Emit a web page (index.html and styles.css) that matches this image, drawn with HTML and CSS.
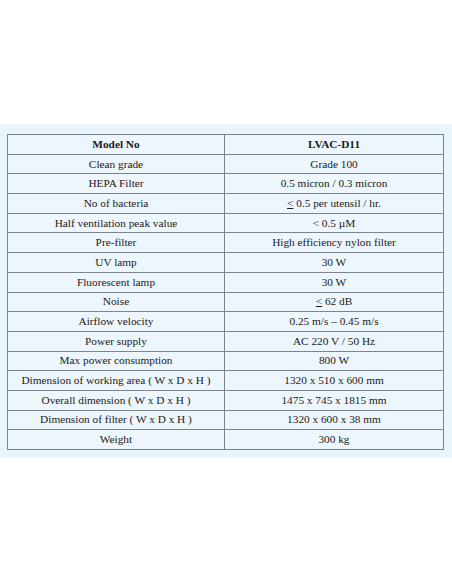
FILE: index.html
```html
<!DOCTYPE html>
<html>
<head>
<meta charset="utf-8">
<link rel="stylesheet" href="styles.css">
</head>
<body>
<div class="panel">
<table class="spec">
<colgroup><col class="c1"><col class="c2"></colgroup>
<tr class="head"><th>Model No</th><th>LVAC-D11</th></tr>
<tr><td>Clean grade</td><td>Grade 100</td></tr>
<tr><td>HEPA Filter</td><td>0.5 micron / 0.3 micron</td></tr>
<tr><td>No of bacteria</td><td><u>&lt;</u> 0.5 per utensil / hr.</td></tr>
<tr><td>Half ventilation peak value</td><td>&lt; 0.5 µM</td></tr>
<tr><td>Pre-filter</td><td>High efficiency nylon filter</td></tr>
<tr><td>UV lamp</td><td>30 W</td></tr>
<tr><td>Fluorescent lamp</td><td>30 W</td></tr>
<tr><td>Noise</td><td><u>&lt;</u> 62 dB</td></tr>
<tr><td>Airflow velocity</td><td>0.25 m/s – 0.45 m/s</td></tr>
<tr><td>Power supply</td><td>AC 220 V / 50 Hz</td></tr>
<tr><td>Max power consumption</td><td>800 W</td></tr>
<tr><td>Dimension of working area ( W x D x H )</td><td>1320 x 510 x 600 mm</td></tr>
<tr><td>Overall dimension ( W x D x H )</td><td>1475 x 745 x 1815 mm</td></tr>
<tr><td>Dimension of filter ( W x D x H )</td><td>1320 x 600 x 38 mm</td></tr>
<tr><td>Weight</td><td>300 kg</td></tr>
</table>
</div>
</body>
</html>
```
FILE: styles.css
```css
html, body {
  margin: 0;
  padding: 0;
  background: #ffffff;
}
body {
  width: 452px;
  height: 584px;
  font-family: "Liberation Serif", "DejaVu Serif", serif;
  color: #1a1a1a;
}
.panel {
  margin-top: 124px;
  padding: 10px 9px 8px 7px;
  background: #eaf4fb;
}
.spec {
  border-collapse: collapse;
  width: 436px;
  table-layout: fixed;
  background: #edf6fc;
}
.c1 { width: 217px; }
.c2 { width: 219px; }
.spec th, .spec td {
  border: 1px solid #7b858b;
  height: 18.7px;
  padding: 0;
  text-align: center;
  vertical-align: middle;
  font-size: 11.3px;
  line-height: 13px;
  white-space: nowrap;
}
.spec th {
  font-weight: bold;
}
.spec u {
  text-decoration: underline;
  text-underline-offset: 1px;
}
```
